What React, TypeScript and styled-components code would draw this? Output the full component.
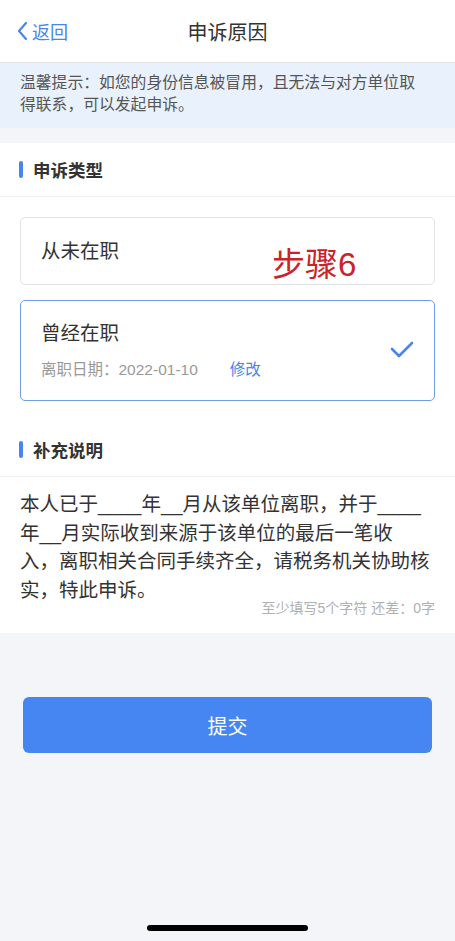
import React from "react";
import styled, {createGlobalStyle} from "styled-components";

const GlobalStyle = createGlobalStyle`
  html, body {
    margin: 0;
    padding: 0;
    background: #f4f5f9;
  }
  body {
    font-family: "Liberation Sans", "Noto Sans CJK SC", "Noto Sans", sans-serif;
    color: #333;
  }
  * {
    box-sizing: border-box;
  }
`;

const Page = styled.div`
  min-height: 100vh;
  display: flex;
  flex-direction: column;
  background: #f4f5f9;
`;

const NavBar = styled.div`
  height: 63px;
  background: #fff;
  border-bottom: 1px solid #e2e3e6;
  display: flex;
  align-items: center;
  justify-content: center;
  position: relative;
`;

const BackButton = styled.div`
  position: absolute;
  left: 16px;
  top: 0;
  bottom: 0;
  display: flex;
  align-items: center;
  gap: 4px;
  color: #4a86e8;
  font-size: 18px;
`;

const NavTitle = styled.div`
  font-size: 20px;
  color: #333;
`;

const Notice = styled.div`
  background: #e8f1fc;
  padding: 9px 30px 12px 20px;
  font-size: 15.8px;
  line-height: 22px;
  color: #555;
`;

const Section = styled.div<{ $top?: number }>`
  background: #fff;
  margin-top: ${p => p.$top ?? 0}px;
`;

const SectionHead = styled.div`
  height: 54px;
  display: flex;
  align-items: center;
  gap: 10px;
  padding: 0 19px;
  font-size: 17.5px;
  font-weight: 700;
  color: #333;
  border-bottom: 1px solid #f0f0f2;
`;

const Bar = styled.span`
  width: 4px;
  height: 17px;
  border-radius: 2px;
  background: #4586f3;
`;

const Options = styled.div`
  padding: 20px 20px 22px;
  display: flex;
  flex-direction: column;
  gap: 15px;
`;

const Option = styled.div<{ $active?: boolean }>`
  position: relative;
  border: 1px solid ${p => (p.$active ? "#6e9fe6" : "#e2e3e6")};
  border-radius: 5px;
  padding: ${p => (p.$active ? "18px 20px 19px" : "0 20px")};
  min-height: ${p => (p.$active ? 101 : 68)}px;
  display: flex;
  align-items: center;
`;

const OptionBody = styled.div`
  flex: 1;
  display: flex;
  flex-direction: column;
  gap: 12px;
`;

const OptionLabel = styled.div`
  font-size: 19.5px;
  line-height: 28px;
  color: #333;
`;

const OptionMeta = styled.div`
  font-size: 15.5px;
  line-height: 22px;
  color: #999;
  display: flex;
  gap: 32px;
`;

const EditLink = styled.span`
  color: #4a86e8;
`;

const Stamp = styled.div`
  position: absolute;
  left: 251px;
  top: 30px;
  font-size: 33px;
  line-height: 1;
  color: #cc2229;
  pointer-events: none;
`;

const NoteBox = styled.div`
  padding: 13px 20px 17px;
`;

const NoteText = styled.div`
  font-size: 19.5px;
  line-height: 28.5px;
  color: #333;
`;

const NoteLine = styled.span`
  display: block;
  white-space: nowrap;
`;

const Counter = styled.div`
  text-align: right;
  font-size: 14px;
  line-height: 16px;
  margin-top: -4px;
  color: #b0b0b0;
`;

const SubmitButton = styled.button`
  margin: 64px 23px 0;
  height: 56px;
  border: none;
  border-radius: 6px;
  background: #4586f3;
  color: #fff;
  font-family: inherit;
  font-size: 20px;
`;

const HomeBar = styled.div`
  margin: auto auto 10px;
  width: 161px;
  height: 6px;
  border-radius: 3px;
  background: #000;
`;

const noteLines = [
    "本人已于____年__月从该单位离职，并于____",
    "年__月实际收到来源于该单位的最后一笔收",
    "入，离职相关合同手续齐全，请税务机关协助核",
    "实，特此申诉。",
];

const App = () => {
    return (
        <Page>
            <GlobalStyle/>
            <NavBar>
                <BackButton>
                    <svg width="12" height="20" viewBox="0 0 12 20">
                        <path d="M10 2 L3 10 L10 18" fill="none" stroke="#4a86e8" strokeWidth="2.2" strokeLinecap="round" strokeLinejoin="round"/>
                    </svg>
                    返回
                </BackButton>
                <NavTitle>申诉原因</NavTitle>
            </NavBar>
            <Notice>
                温馨提示：如您的身份信息被冒用，且无法与对方单位取得联系，可以发起申诉。
            </Notice>

            <Section $top={15}>
                <SectionHead>
                    <Bar/>申诉类型
                </SectionHead>
                <Options>
                    <Option>
                        <OptionLabel>从未在职</OptionLabel>
                        <Stamp>步骤6</Stamp>
                    </Option>
                    <Option $active>
                        <OptionBody>
                            <OptionLabel>曾经在职</OptionLabel>
                            <OptionMeta>
                                <span>离职日期：2022-01-10</span>
                                <EditLink>修改</EditLink>
                            </OptionMeta>
                        </OptionBody>
                        <svg width="24" height="18" viewBox="0 0 24 18">
                            <path d="M2 8 L9 15 L22 2" fill="none" stroke="#4a86e8" strokeWidth="2.6" strokeLinecap="round" strokeLinejoin="round"/>
                        </svg>
                    </Option>
                </Options>
                <SectionHead>
                    <Bar/>补充说明
                </SectionHead>
                <NoteBox>
                    <NoteText>
                        {noteLines.map(line => <NoteLine key={line}>{line}</NoteLine>)}
                    </NoteText>
                    <Counter>至少填写5个字符 还差：0字</Counter>
                </NoteBox>
            </Section>

            <SubmitButton>提交</SubmitButton>
            <HomeBar/>
        </Page>
    )
}

export default App;
